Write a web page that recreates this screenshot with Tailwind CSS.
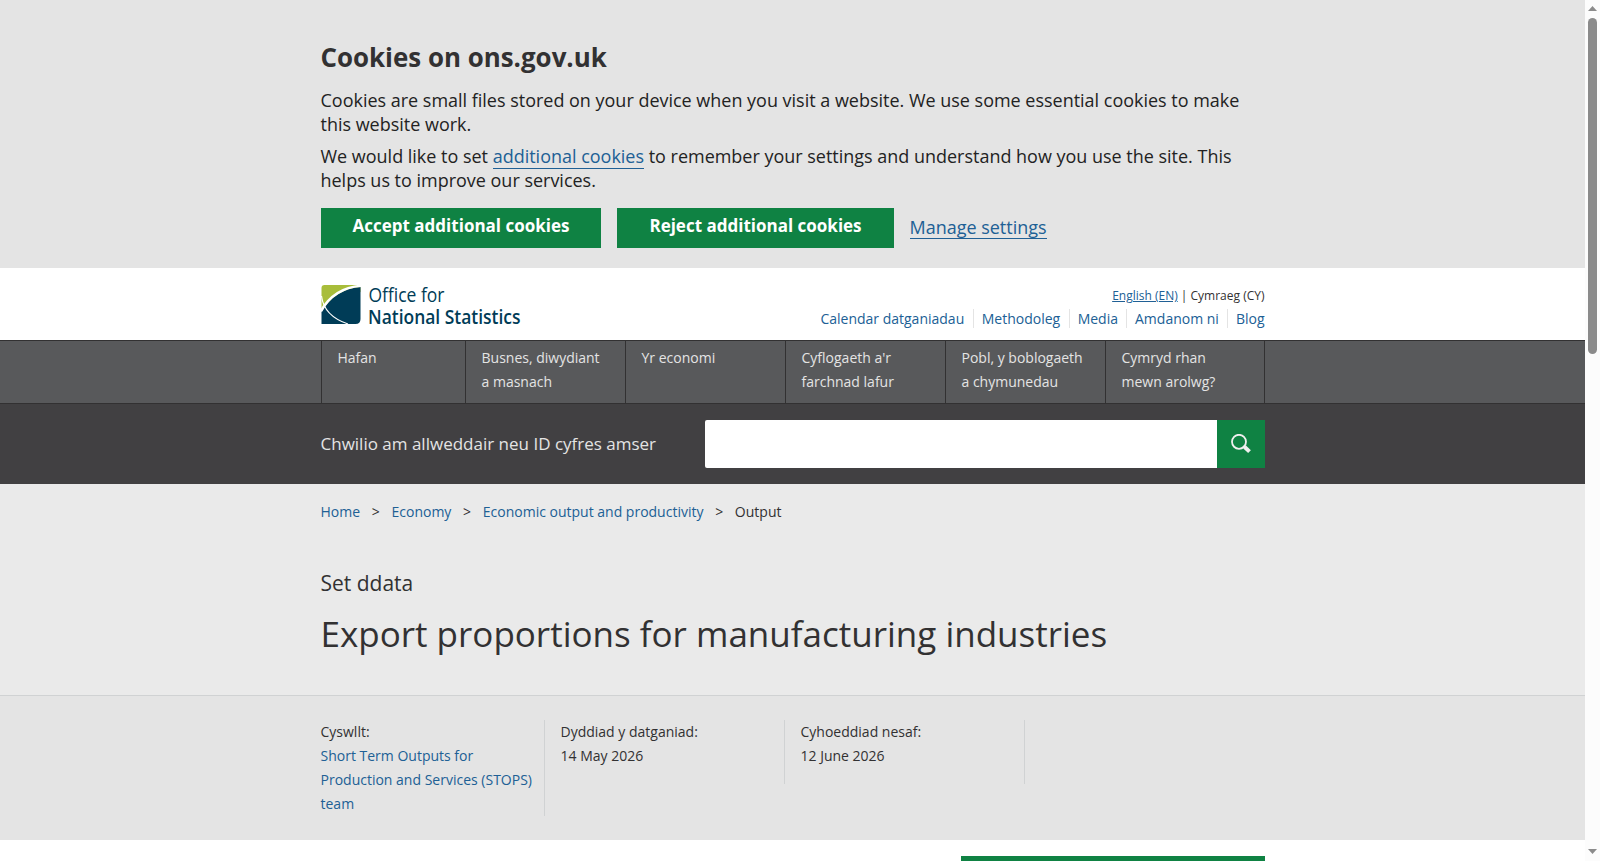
<!DOCTYPE html>
<html lang="cy">
<head>
    <meta charset="UTF-8">
    <meta name="viewport" content="width=device-width, initial-scale=1.0">
    <title>Export proportions for manufacturing industries - Office for National Statistics</title>
    <script src="https://cdn.jsdelivr.net/npm/@tailwindcss/browser@4"></script>
</head>
<body class="flex h-[861px] overflow-hidden bg-white font-['Open_Sans',sans-serif] text-sm leading-6 text-[#323132]">

    <div class="w-[1585px] shrink-0">

        <!-- Cookie banner -->
        <section class="h-[268px] bg-[#e4e4e4] pt-[39px]">
            <div class="mx-auto w-[944px] text-[17.98px] leading-6 text-[#222222]">
                <h2 class="text-[25.9px] leading-9 font-bold text-[#323132]">Cookies on ons.gov.uk</h2>
                <p class="mt-[13px] mb-2">Cookies are small files stored on your device when you visit a website. We use some essential cookies to make this website work.</p>
                <p class="mb-4">We would like to set <a href="#" class="border-b border-[#206095] text-[#206095]">additional cookies</a> to remember your settings and understand how you use the site. This helps us to improve our services.</p>
                <div class="flex">
                    <button class="mr-4 h-10 w-[280px] bg-[#0f8243] pb-1 pl-px text-[17px] font-bold text-white">Accept additional cookies</button>
                    <button class="mr-4 h-10 w-[277px] bg-[#0f8243] pb-1 pl-px text-[17px] font-bold text-white">Reject additional cookies</button>
                    <a href="#" class="mt-[7px] h-6 border-b border-[#206095] text-[#206095]">Manage settings</a>
                </div>
            </div>
        </section>

        <!-- Header -->
        <header class="h-[72px]">
            <div class="mx-auto flex w-[944px] justify-between">
                <svg class="mt-4 block overflow-visible" width="202" height="48" viewBox="0 0 202 48">
                    <path d="M0.500 26V4Q0.500 1 3.500 1H36Q39.500 1 39.500 4V8Z" fill="#a8bd3a"/>
                    <path d="M0.500 40V28Q14 5 39.500 3V35Q39.500 40 34.500 40Z" fill="#003c57"/>
                    <path d="M0 27Q13 4 40 1.800" fill="none" stroke="#fff" stroke-width="2.600"/>
                    <path d="M0.500 12Q3 32 27 40" fill="none" stroke="#fff" stroke-width="1.200"/>
                    <g fill="#003c57" font-family="Open Sans, sans-serif" font-size="20">
                        <text x="47.500" y="18" textLength="76" lengthAdjust="spacingAndGlyphs">Office for</text>
                        <text x="47" y="40" font-weight="600" textLength="152.500" lengthAdjust="spacingAndGlyphs">National Statistics</text>
                    </g>
                </svg>
                <div class="flex flex-col items-end pt-4">
                    <div class="text-xs leading-6"><a href="#" class="text-[#206095] underline">English (EN)</a> | Cymraeg (CY)</div>
                    <ul class="mt-px flex leading-[19px] text-[#206095]">
                        <li class="border-r border-[#e4e4e4] pr-[8.5px]">Calendar datganiadau</li>
                        <li class="border-r border-[#e4e4e4] pr-[8.5px] pl-2">Methodoleg</li>
                        <li class="border-r border-[#e4e4e4] px-2">Media</li>
                        <li class="border-r border-[#e4e4e4] px-2">Amdanom ni</li>
                        <li class="pl-2">Blog</li>
                    </ul>
                </div>
            </div>
        </header>

        <!-- Primary navigation -->
        <nav class="h-16 border-y border-[#323132] bg-[#58595b] text-[#e4e4e4]">
            <ul class="mx-auto flex h-full w-[944px] border-r border-[#323132]">
                <li class="w-36 shrink-0 border-l border-[#323132] pt-[5px] pl-4">Hafan</li>
                <li class="w-40 shrink-0 border-l border-[#323132] pt-[5px] pl-4">Busnes, diwydiant<br>a masnach</li>
                <li class="w-40 shrink-0 border-l border-[#323132] pt-[5px] pl-4">Yr economi</li>
                <li class="w-40 shrink-0 border-l border-[#323132] pt-[5px] pl-4">Cyflogaeth a'r<br>farchnad lafur</li>
                <li class="w-40 shrink-0 border-l border-[#323132] pt-[5px] pl-4">Pobl, y boblogaeth<br>a chymunedau</li>
                <li class="w-[159px] shrink-0 border-l border-[#323132] pt-[5px] pl-4">Cymryd rhan<br>mewn arolwg?</li>
            </ul>
        </nav>

        <!-- Search -->
        <div class="h-20 bg-[#414042] py-4">
            <form class="mx-auto flex w-[944px] items-center">
                <label for="nav-search" class="w-96 text-[17px] text-[#e4e4e4]">Chwilio am allweddair neu ID cyfres amser</label>
                <input id="nav-search" type="search" class="h-12 w-[512px] rounded-l-xs bg-white">
                <button type="button" class="flex h-12 w-12 items-center justify-center bg-[#0f8243]" aria-label="Chwilio">
                    <svg width="20" height="20" viewBox="0 0 20 20" fill="none" stroke="#f0f0f0">
                        <circle cx="8" cy="7.800" r="7" stroke-width="1.800"/>
                        <path d="M12.300 12L14.500 14" stroke-width="2.400"/>
                        <path d="M13.600 13L18.500 17.600" stroke-width="4"/>
                    </svg>
                </button>
            </form>
        </div>

        <!-- Page intro -->
        <section class="h-[212px] border-b border-[#d0d2d3] bg-[#eaeaea] pt-4">
            <div class="mx-auto w-[944px]">
                <ol class="flex">
                    <li class="text-[#206095]">Home</li>
                    <li class="px-[11.7px]">&gt;</li>
                    <li class="text-[#206095]">Economy</li>
                    <li class="px-[11.7px]">&gt;</li>
                    <li class="text-[#206095]">Economic output and productivity</li>
                    <li class="px-[11.7px]">&gt;</li>
                    <li>Output</li>
                </ol>
                <h1>
                    <span class="mt-[43px] block text-[21px] leading-8">Set ddata</span>
                    <span class="mt-[15px] block text-[35px] leading-10">Export proportions for manufacturing industries</span>
                </h1>
            </div>
        </section>

        <!-- Release details -->
        <section class="h-36 bg-[#e4e4e4] pt-6">
            <div class="mx-auto flex w-[944px] items-start">
                <div class="h-24 w-56 shrink-0 border-r border-[#d0d2d3] pr-2">Cyswllt:<br><a href="#" class="text-[#206095]">Short Term Outputs for Production and Services (STOPS) team</a></div>
                <div class="h-16 w-60 shrink-0 border-r border-[#d0d2d3] pl-4">Dyddiad y datganiad:<br>14 May 2026</div>
                <div class="h-16 w-60 shrink-0 border-r border-[#d0d2d3] pl-4">Cyhoeddiad nesaf:<br>12 June 2026</div>
            </div>
        </section>

        <div class="mx-auto flex w-[944px] justify-end pt-4">
            <div class="h-10 w-[304px] bg-[#0f8243]"></div>
        </div>
    </div>

    <!-- Scrollbar -->
    <div class="flex h-[861px] w-[15px] flex-col items-center bg-[#fcfcfc]">
        <svg class="mt-1.5 shrink-0" width="9" height="5" viewBox="0 0 9 5" fill="#8b8b8b"><path d="M0 5L4.500 0L9 5Z"/></svg>
        <div class="mt-[7px] h-[336px] w-[9px] shrink-0 rounded-full bg-[#8b8b8b]"></div>
        <svg class="mt-auto mb-[7px] shrink-0" width="9" height="5" viewBox="0 0 9 5" fill="#8b8b8b"><path d="M0 0H9L4.500 5Z"/></svg>
    </div>

</body>
</html>
